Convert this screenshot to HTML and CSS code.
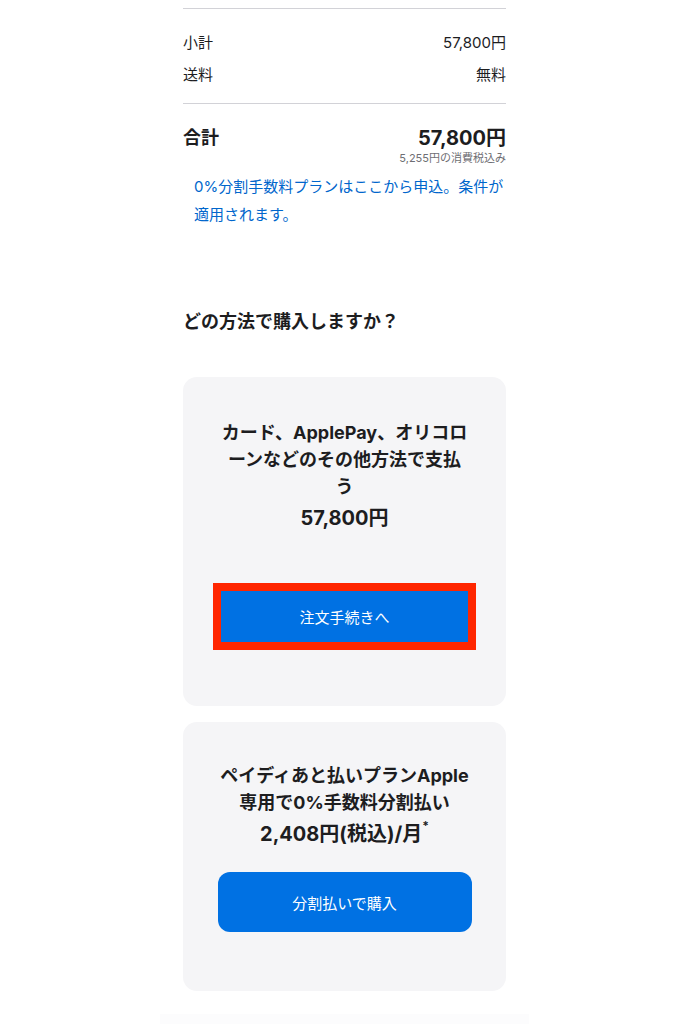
FILE: index.html
```html
<!DOCTYPE html>
<html lang="ja">
<head>
<meta charset="utf-8">
<title>購入方法</title>
<link rel="stylesheet" href="styles.css">
</head>
<body>
<main class="page">
  <div class="divider first"></div>
  <section class="summary">
    <div class="row"><span>小計</span><span>57,800円</span></div>
    <div class="row"><span>送料</span><span>無料</span></div>
  </section>
  <div class="divider"></div>
  <section class="total">
    <div class="total-row"><span>合計</span><span class="total-price">57,800円</span></div>
    <div class="tax">5,255円の消費税込み</div>
    <a class="link" href="#">0%分割手数料プランはここから申込。条件が適用されます。</a>
  </section>
  <h2 class="heading">どの方法で購入しますか？</h2>
  <section class="card card-one">
    <h3 class="card-title">カード、ApplePay、オリコロ<br>ーンなどのその他方法で支払<br>う</h3>
    <div class="card-price">57,800円</div>
    <div class="highlight">
      <button class="btn btn-square">注文手続きへ</button>
    </div>
  </section>
  <section class="card card-two">
    <h3 class="card-title">ペイディあと払いプランApple<br>専用で0%手数料分割払い</h3>
    <div class="card-price">2,408円(税込)/月<sup class="mark">*</sup></div>
    <button class="btn btn-round">分割払いで購入</button>
  </section>
  <div class="next"></div>
</main>
</body>
</html>
```

FILE: styles.css
```css
* { box-sizing: border-box; }
html, body { margin: 0; padding: 0; background: #fff; }
body {
  font-family: "Inter", "Noto Sans CJK JP", "Noto Sans", sans-serif;
  color: #1d1d1f;
}
.page {
  width: 323px;
  margin: 0 auto;
  padding-top: 8px;
  display: flex;
  flex-direction: column;
}
.divider { height: 1px; background: #d2d2d7; }
.summary { padding-top: 18px; margin-bottom: 12px; }
.row {
  display: flex;
  justify-content: space-between;
  height: 32px;
  line-height: 32px;
  font-size: 15px;
}
.total { padding-top: 21px; display: flex; flex-direction: column; }
.total-row {
  display: flex;
  justify-content: space-between;
  height: 26px;
  line-height: 26px;
  font-size: 18px;
  font-weight: 700;
}
.total-price { font-size: 20px; }
.tax {
  text-align: right;
  font-size: 11px;
  line-height: 14px;
  color: #6e6e73;
}
.link {
  margin-top: 8px;
  padding-left: 11px;
  font-size: 15px;
  line-height: 28px;
  color: #0066cc;
  text-decoration: none;
}
.heading {
  margin: 80px 0 0;
  font-size: 18px;
  line-height: 26px;
  font-weight: 700;
}
.card {
  background: #f5f5f7;
  border-radius: 14px;
  display: flex;
  flex-direction: column;
  align-items: center;
  text-align: center;
}
.card-one { margin-top: 42px; padding: 42px 0 56px; }
.card-two { margin-top: 16px; padding: 40px 0 59px; }
.card-title {
  margin: 0;
  font-size: 18px;
  line-height: 27px;
  font-weight: 700;
}
.card-price {
  margin-top: 5px;
  font-size: 20px;
  line-height: 26px;
  font-weight: 700;
}
.mark { font-size: 12px; vertical-align: top; line-height: 14px; position: relative; top: -2px; }
.highlight {
  margin-top: 52px;
  border: 8px solid #ff2600;
  width: 263px;
  height: 67px;
}
.btn {
  border: 0;
  background: #0071e3;
  color: #fff;
  font-family: inherit;
  font-size: 15px;
  display: block;
}
.btn-square { width: 100%; height: 100%; }
.btn-round {
  margin-top: 25px;
  width: 254px;
  height: 60px;
  border-radius: 12px;
}
.next {
  margin: 23px -23px 0;
  height: 20px;
  background: #fcfcfd;
}
```
